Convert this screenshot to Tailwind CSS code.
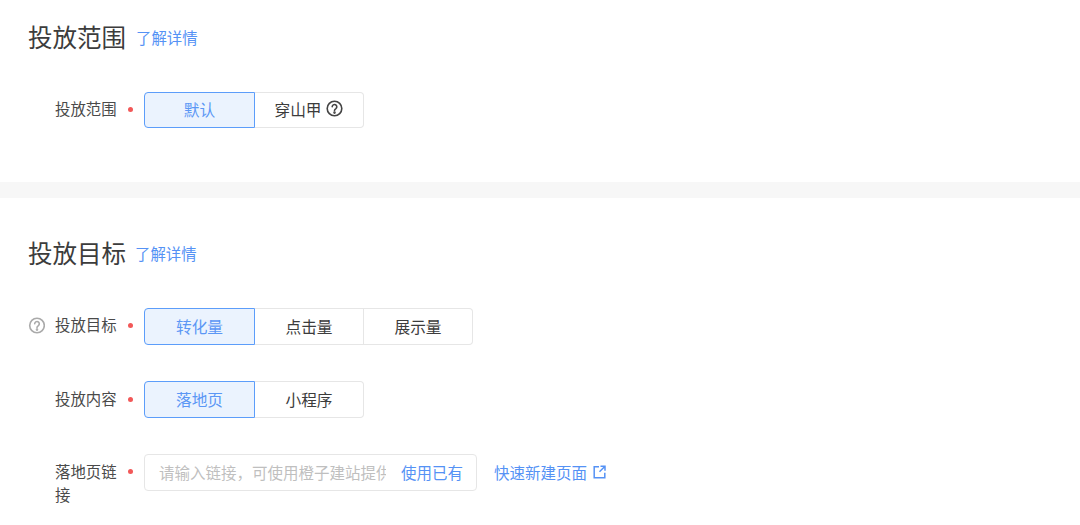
<!DOCTYPE html>
<html lang="zh">
<head>
<meta charset="utf-8">
<script src="https://cdn.jsdelivr.net/npm/@tailwindcss/browser@4"></script>
</head>
<body class="bg-white overflow-hidden font-['Noto_Sans_CJK_SC','Noto_Sans',sans-serif] text-[#3c3c3c]">
<div class="w-[1080px] h-[525px] overflow-hidden">
  <section class="h-[182px] pl-[28px] pt-[19px]">
    <div class="flex items-center h-[36px]">
      <h2 class="text-[24.5px] leading-[36px] font-normal text-[#3c3c3c]">投放范围</h2>
      <a class="ml-[10px] text-[15.4px] leading-[36px] text-[#5592f5]">了解详情</a>
    </div>
    <div class="flex items-center mt-[37px] h-[36px]">
      <div class="w-[27px]"></div>
      <span class="-mt-[2px] text-[15.4px] text-[#4a4a4a] w-[62px] whitespace-nowrap">投放范围</span>
      <i class="-mt-[2px] ml-[11px] w-[5px] h-[5px] rounded-full bg-[#f25858]"></i>
      <div class="ml-[11px] flex h-[36px] w-[220px] text-[15.7px]">
        <div class="w-[111px] flex items-center justify-center border border-[#5c9dfa] bg-[#ebf3fe] text-[#5b97f5] rounded-l-[4px]">默认</div>
        <div class="flex-1 flex items-center justify-center gap-[4px] pr-[1px] border border-l-0 border-[#e6e6e6] rounded-r-[4px]">
          <span>穿山甲</span>
          <svg class="w-[17px] h-[17px] -mt-[3px]" viewBox="0 0 17 17" fill="none" stroke="#444" stroke-width="1.6"><circle cx="8.5" cy="8.5" r="7.3"/><path d="M6.2 6.8a2.3 2.3 0 1 1 3.7 1.8c-.9.6-1.4 1-1.4 2" stroke-linecap="round"/><circle cx="8.5" cy="12.6" r=".5" fill="#444"/></svg>
        </div>
      </div>
    </div>
  </section>
  <div class="h-[16px] bg-[#f7f7f7]"></div>
  <section class="pl-[28px] pt-[37px]">
    <div class="flex items-center h-[36px]">
      <h2 class="text-[24.5px] leading-[36px] font-normal text-[#3c3c3c]">投放目标</h2>
      <a class="ml-[9px] text-[15.4px] leading-[36px] text-[#5592f5]">了解详情</a>
    </div>
    <div class="flex items-center mt-[37px] h-[37px]">
      <svg class="-mt-[2px] w-[17px] h-[17px] mr-[10px]" viewBox="0 0 17 17" fill="none" stroke="#aaa" stroke-width="1.6"><circle cx="9" cy="8.5" r="7.3"/><path d="M6.7 6.8a2.3 2.3 0 1 1 3.7 1.8c-.9.6-1.4 1-1.4 2" stroke-linecap="round"/><circle cx="9" cy="12.6" r=".5" fill="#aaa"/></svg>
      <span class="-mt-[3px] text-[15.4px] text-[#4a4a4a] w-[62px] whitespace-nowrap">投放目标</span>
      <i class="-mt-[2px] ml-[11px] w-[5px] h-[5px] rounded-full bg-[#f25858]"></i>
      <div class="ml-[11px] flex h-[37px] w-[329px] text-[15.7px]">
        <div class="w-[111px] flex items-center justify-center border border-[#5c9dfa] bg-[#ebf3fe] text-[#5b97f5] rounded-l-[4px]">转化量</div>
        <div class="w-[109px] flex items-center justify-center border border-l-0 border-[#e6e6e6]">点击量</div>
        <div class="flex-1 flex items-center justify-center border border-l-0 border-[#e6e6e6] rounded-r-[4px]">展示量</div>
      </div>
    </div>
    <div class="flex items-center mt-[36px] h-[37px]">
      <div class="w-[27px]"></div>
      <span class="-mt-[1px] text-[15.4px] text-[#4a4a4a] w-[62px] whitespace-nowrap">投放内容</span>
      <i class="-mt-[1px] ml-[11px] w-[5px] h-[5px] rounded-full bg-[#f25858]"></i>
      <div class="ml-[11px] flex h-[37px] w-[220px] text-[15.7px]">
        <div class="w-[111px] flex items-center justify-center border border-[#5c9dfa] bg-[#ebf3fe] text-[#5b97f5] rounded-l-[4px]">落地页</div>
        <div class="flex-1 flex items-center justify-center border border-l-0 border-[#e6e6e6] rounded-r-[4px]">小程序</div>
      </div>
    </div>
    <div class="flex items-start mt-[36px]">
      <div class="w-[27px] shrink-0"></div>
      <span class="text-[15.4px] leading-[23px] text-[#4a4a4a] w-[62px] pt-[6px]">落地页链接</span>
      <i class="ml-[11px] mt-[15px] w-[5px] h-[5px] rounded-full bg-[#f25858]"></i>
      <div class="ml-[11px] flex items-center h-[37px] w-[333px] border border-[#e6e6e6] rounded-[4px] pl-[14px] pr-[13px] text-[15.5px]">
        <span class="w-[227px] overflow-hidden whitespace-nowrap text-[#bfbfbf]">请输入链接，可使用橙子建站提供</span>
        <span class="ml-auto whitespace-nowrap text-[#5592f5]">使用已有</span>
      </div>
      <a class="ml-[17px] mt-[7px] flex items-center gap-[6px] text-[15.5px] leading-[22px] text-[#5592f5] whitespace-nowrap">快速新建页面
        <svg class="w-[13px] h-[14px] -mt-[1px]" viewBox="0 0 13 14" fill="none" stroke="#5592f5" stroke-width="1.5"><path d="M6 1.7H1.2v11h10.6V7.7"/><path d="M7.5 1.2h4.5v4.5M12 1.2 6.5 6.7"/></svg>
      </a>
    </div>
  </section>
</div>
</body>
</html>
